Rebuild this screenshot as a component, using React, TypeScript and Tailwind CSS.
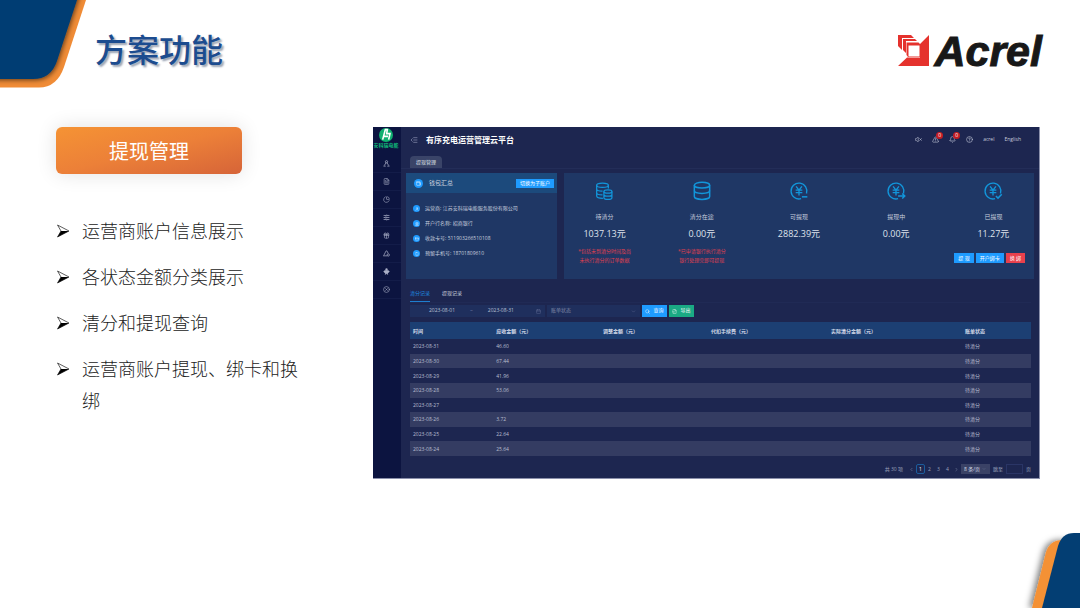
import React, { useState } from 'react';
import {
  Bell,
  Calendar,
  ChartPie,
  ChevronDown,
  ChevronLeft,
  ChevronRight,
  CircleHelp,
  CircleX,
  CreditCard,
  FileOutput,
  FileText,
  Gift,
  Landmark,
  ListIndentDecrease,
  Search,
  Smartphone,
  TriangleAlert,
  User,
  VolumeX,
  Wallet,
} from 'lucide-react';

interface BillRow {
  date: string;
  amount: string;
}

const features = [
  '运营商账户信息展示',
  '各状态金额分类展示',
  '清分和提现查询',
  '运营商账户提现、绑卡和换绑',
];

const accountInfo = [
  { icon: User, label: '运营商', value: '江苏安科瑞电能服务股份有限公司' },
  { icon: Landmark, label: '开户行名称', value: '招商银行' },
  { icon: CreditCard, label: '收款卡号', value: '511903266510108' },
  { icon: Smartphone, label: '预留手机号', value: '18701809610' },
];

const rows: BillRow[] = [
  { date: '2023-08-31', amount: '46.60' },
  { date: '2023-08-30', amount: '67.44' },
  { date: '2023-08-29', amount: '41.96' },
  { date: '2023-08-28', amount: '53.06' },
  { date: '2023-08-27', amount: '' },
  { date: '2023-08-26', amount: '3.72' },
  { date: '2023-08-25', amount: '22.64' },
  { date: '2023-08-24', amount: '25.64' },
];

const OrgIcon: React.FC<{ className?: string }> = ({ className }) => (
  <svg className={className} viewBox="0 0 24 24" fill="none" stroke="currentColor" strokeWidth="2.5">
    <circle cx="12" cy="6" r="4" />
    <path d="M10 10 5 18M14 10l5 8M3 21h5M16 21h5" strokeLinecap="round" />
  </svg>
);

const SwitchIcon: React.FC<{ className?: string }> = ({ className }) => (
  <svg className={className} viewBox="0 0 24 24" fill="none" stroke="currentColor" strokeWidth="2.5">
    <path d="M2 5h9M15 5h7M2 12h5M11 12h11M2 19h9M15 19h7" />
    <circle cx="13" cy="5" r="2" />
    <circle cx="9" cy="12" r="2" />
    <circle cx="13" cy="19" r="2" />
  </svg>
);

const AlarmIcon: React.FC<{ className?: string }> = ({ className }) => (
  <svg className={className} viewBox="0 0 24 24" fill="none" stroke="currentColor" strokeWidth="2.5">
    <path d="M3 18 9 6a3 3 0 0 1 6 0l2 4M2 20h11" strokeLinecap="round" />
    <circle cx="18" cy="17" r="4" />
  </svg>
);

const RobotIcon: React.FC<{ className?: string }> = ({ className }) => (
  <svg className={className} viewBox="0 0 24 24" fill="currentColor">
    <circle cx="12" cy="5" r="4" />
    <path d="M1 12l5-4h12l5 4-5 5h-2l2 5h-4l-2-3-2 3H6l2-5H6z" />
  </svg>
);

const menu = [OrgIcon, FileText, ChartPie, SwitchIcon, Gift, AlarmIcon, RobotIcon, CircleX];

const YenIcon: React.FC<{ mark: string }> = ({ mark }) => (
  <svg className="size-5" viewBox="0 0 24 24" fill="none" stroke="#1296db" strokeWidth="1.6">
    <path d="M21 15A9.5 9.5 0 1 0 14.5 21.2" />
    <path d="M8.5 6.5 12 11l3.5-4.5M8 11h8M8 14h8M12 11v6.5" />
    <path d={mark} strokeWidth="1.8" />
  </svg>
);

const StackIcon = () => (
  <svg className="size-5" viewBox="0 0 24 24" fill="none" stroke="#1296db" strokeWidth="1.8">
    <ellipse cx="12" cy="5" rx="9.2" ry="3.4" />
    <path d="M2.800 5v13.500c0 2 4 3.600 9.200 3.600s9.200-1.600 9.200-3.600V5" />
    <path d="M2.800 11.500c0 2 4 3.400 9.200 3.400s9.200-1.400 9.200-3.400" />
  </svg>
);

const DoubleStackIcon = () => (
  <svg className="size-5" viewBox="0 0 24 24" fill="none" stroke="#1296db" strokeWidth="1.5">
    <ellipse cx="9" cy="5" rx="7" ry="2.600" />
    <path d="M2 5v13c0 1.600 3 2.800 7.500 2.800M16 5v4M2 9.500c0 1.500 3 2.600 7 2.600M2 14c0 1.500 3 2.600 7 2.600" />
    <ellipse cx="15.500" cy="12.500" rx="4.800" ry="2" />
    <path d="M10.700 12.500v7.500c0 1.200 2 2 4.800 2s4.800-.8 4.800-2v-7.500M10.700 16.200c0 1.200 2 2 4.800 2s4.800-.8 4.800-2" />
  </svg>
);

const stats = [
  { icon: <DoubleStackIcon />, label: '待清分', value: '1037.13元', note: ['*包括未到清分时间及尚', '未执行清分的订单数据'] },
  { icon: <StackIcon />, label: '清分在途', value: '0.00元', note: ['*已申请银行执行清分', '银行处理完即可提现'] },
  { icon: <YenIcon mark="M15.500 19h6.500" />, label: '可提现', value: '2882.39元' },
  { icon: <YenIcon mark="M14.500 18h8M19.500 15l3 3-3 3" />, label: '提现中', value: '0.00元' },
  { icon: <YenIcon mark="M15.500 18l2.500 2.500 4.500-4.500" />, label: '已提现', value: '11.27元' },
];

const AcrelLogo = () => (
  <div className="flex items-center gap-1">
    <svg className="size-8" viewBox="0 0 32 32" fill="#e5322d">
      <path d="M0 0h13l3 3H4v12l-4-4z" />
      <path d="M5 4h12l2 2H8v12l-3-3z" />
      <path d="M31 0v31H0l9-8.500h13V9z" />
      <path d="M8.500 7.500h12l2.500 2.500v12H10l-1.500-2z" />
      <path d="M10.500 10.500h11v11h-11z" fill="#fff" />
    </svg>
    <span className="text-[43px] leading-8 font-bold italic text-[#181818] [-webkit-text-stroke:1px_#181818] font-['Liberation_Sans',sans-serif]">
      Acrel
    </span>
  </div>
);

const Corners = () => (
  <>
    <svg className="absolute top-0 left-0 w-24 h-24" viewBox="0 0 96 96">
      <defs>
        <filter id="soft" x="-20%" y="-20%" width="150%" height="150%">
          <feDropShadow dx="1" dy="1" stdDeviation="2.500" floodOpacity="0.6" />
        </filter>
        <filter id="softLeft" x="-40%" y="-20%" width="180%" height="150%">
          <feDropShadow dx="-3" dy="0" stdDeviation="3" floodOpacity="0.5" />
        </filter>
        <clipPath id="orangeTop">
          <path d="M0 0H86L64 67Q57 87.500 39 87.500H0z" />
        </clipPath>
      </defs>
      <path d="M0 0H86L64 67Q57 87.500 39 87.500H0z" fill="#f08c36" />
      <g clipPath="url(#orangeTop)">
        <path d="M-9 -9H80L57 61Q51 79 33 79H-9z" fill="#033e73" filter="url(#soft)" />
      </g>
    </svg>
    <svg className="absolute right-0 bottom-0 w-20 h-24" viewBox="0 0 80 96">
      <path d="M32 96 46 40Q50 28 62 28H80V96z" fill="#f49136" filter="url(#softLeft)" />
      <path d="M42 96 58 34Q62 21 74 21H80V96z" fill="#033e73" />
    </svg>
  </>
);

const Sidebar = () => (
  <nav className="w-7 shrink-0 bg-[#0c1440]">
    <div className="h-7 pr-0.5 flex flex-col items-center text-[5px] leading-[4px] text-[#10b878] font-bold whitespace-nowrap">
      <svg className="size-4" viewBox="0 0 24 24">
        <circle cx="12" cy="12" r="10.500" fill="#10b070" />
        <path d="M7 19 11 4h3l-1 6h5l-2 9M9 14h6" fill="none" stroke="#fff" strokeWidth="2.400" />
      </svg>
      安科瑞电能
    </div>
    {menu.map((Icon, i) => (
      <a key={i} href="#menu" className="h-[18px] pr-0.5 flex items-center justify-center border-b border-[#131c49] text-[#a9aec6]">
        <Icon className="size-[7px]" />
      </a>
    ))}
  </nav>
);

const Header = () => (
  <header className="h-[25px] flex items-center pl-[9px] pr-[18px] text-[#c5c9da]">
    <ListIndentDecrease className="size-2 text-[#8f96b5]" />
    <h2 className="ml-2 text-[8px] font-bold text-white">有序充电运营管理云平台</h2>
    <div className="ml-auto flex items-center gap-[10px] text-[5px]">
      <VolumeX className="size-[7px]" />
      {[TriangleAlert, Bell].map((Icon, i) => (
        <span key={i} className="relative">
          <Icon className="size-[7px]" />
          <span className="absolute -top-1 left-1 size-[7px] rounded-full bg-[#c41d24] text-white text-center leading-[7px]">0</span>
        </span>
      ))}
      <CircleHelp className="size-[7px]" />
      <a href="#user">acrel</a>
      <a href="#lang">English</a>
    </div>
  </header>
);

const WalletCard = () => (
  <section className="w-[151px] shrink-0 bg-[#1f3765] text-[#c8cfdf]">
    <div className="h-5 flex items-center px-[3px] bg-[#1c4a7c]">
      <span className="ml-[5px] size-[9px] rounded-full bg-[#1e9bff] flex items-center justify-center">
        <Wallet className="size-[5px] text-white" />
      </span>
      <h3 className="ml-1.5 text-[6px]">钱包汇总</h3>
      <button className="ml-auto h-[9px] px-1 bg-[#1e9bff] text-white text-[5px] leading-[9px]">切换为子账户</button>
    </div>
    <ul className="pt-2 pl-[7px] text-[5px]">
      {accountInfo.map(({ icon: Icon, label, value }) => (
        <li key={label} className="h-[15px] flex items-center gap-[5px] whitespace-nowrap">
          <span className="size-[7px] rounded-full bg-[#1e9bff] flex items-center justify-center">
            <Icon className="size-1 text-white" />
          </span>
          {label}: {value}
        </li>
      ))}
    </ul>
  </section>
);

const StatsCard = () => (
  <section className="flex-1 bg-[#1f3765] px-2 flex flex-col text-[#c8cfdf]">
    <div className="grid grid-cols-5 -mx-4 pt-2 text-center">
      {stats.map((s) => (
        <div key={s.label} className="flex flex-col items-center">
          {s.icon}
          <p className="mt-[11px] text-[6px] leading-[10px]">{s.label}</p>
          <p className="mt-1 text-[9px] leading-4 text-[#dfe3ec]">{s.value}</p>
          {s.note && (
            <p className="mt-[5px] text-[5px] leading-[9px] text-[#e0404f]">
              {s.note[0]}
              <br />
              {s.note[1]}
            </p>
          )}
        </div>
      ))}
    </div>
    <div className="-mt-3 pr-px flex justify-end gap-0.5 text-[5px] leading-[10px] text-white">
      <button className="px-1 bg-[#1e9bff]">提 现</button>
      <button className="px-1 bg-[#1e9bff]">开户绑卡</button>
      <button className="px-1 bg-[#e8404c]">换 绑</button>
    </div>
  </section>
);

const Filters = () => (
  <form className="mt-0.5 flex gap-0.5 h-3 text-[5px] text-[#b9c0d4]" onSubmit={(e) => e.preventDefault()}>
    <div className="w-[135px] flex items-center bg-[#1f2f5d] pr-1">
      <input aria-label="开始日期" defaultValue="2023-08-01" className="w-[60px] pl-1 text-center bg-transparent" />
      <span className="text-[#66709a]">~</span>
      <input aria-label="结束日期" defaultValue="2023-08-31" className="w-[56px] text-center bg-transparent" />
      <Calendar className="ml-auto size-[5px] text-[#66709a]" />
    </div>
    <div className="w-[93px] flex items-center bg-[#1f2f5d] px-1">
      <select aria-label="账单状态" className="flex-1 appearance-none bg-transparent text-[#8088a8]">
        <option>账单状态</option>
      </select>
      <ChevronDown className="size-[5px] text-[#66709a]" />
    </div>
    <button className="w-[25px] flex items-center justify-center gap-[3px] bg-[#1e9bff] text-white">
      <Search className="size-[5px]" />
      查询
    </button>
    <button type="button" className="w-[25px] flex items-center justify-center gap-[3px] bg-[#1aaa84] text-white">
      <FileOutput className="size-[5px]" />
      导出
    </button>
  </form>
);

const BillTable = () => (
  <table className="mt-[5px] w-full h-[134px] table-fixed text-left text-[5px] leading-[10px] text-[#b9bfd0]">
    <thead>
      <tr className="h-[17px] bg-[#1c3f73] text-[#d5dcea]">
        <th className="w-[13.4%] pl-[3px]">时间</th>
        <th className="w-[17.2%] pl-[3px]">应收金额（元）</th>
        <th className="w-[17.4%] pl-[3px]">调整金额（元）</th>
        <th className="w-[19.3%] pl-[3px]">代扣手续费（元）</th>
        <th className="w-[21.6%] pl-[3px]">实际清分金额（元）</th>
        <th className="pl-[3px]">账单状态</th>
      </tr>
    </thead>
    <tbody>
      {rows.map((row) => (
        <tr key={row.date} className="even:bg-[#343c62]">
          <td className="pl-[3px]">{row.date}</td>
          <td className="pl-[3px]">{row.amount}</td>
          <td />
          <td />
          <td />
          <td className="pl-[3px]">待清分</td>
        </tr>
      ))}
    </tbody>
  </table>
);

const Pagination = () => {
  const [page, setPage] = useState(1);

  return (
    <div className="mt-2 h-[10px] flex items-center justify-end text-[5px] leading-[10px] text-[#9aa1bb]">
      <span className="mr-1">共 30 项</span>
      <button aria-label="上一页" onClick={() => setPage(Math.max(1, page - 1))}>
        <ChevronLeft className="size-[5px] mx-0.5" />
      </button>
      {[1, 2, 3, 4].map((n) => (
        <button
          key={n}
          onClick={() => setPage(n)}
          className={n === page ? 'w-[9px] h-[10px] leading-2 border border-[#1b5c9c] text-white rounded-xs' : 'w-[9px]'}
        >
          {n}
        </button>
      ))}
      <button aria-label="下一页" onClick={() => setPage(Math.min(4, page + 1))}>
        <ChevronRight className="size-[5px] mx-0.5" />
      </button>
      <span className="w-[29px] h-[10px] flex items-center pl-[3px] pr-1 bg-[#3a4266] text-[#d5dcea]">
        <select aria-label="每页条数" className="flex-1 appearance-none bg-transparent leading-[10px]">
          <option>8 条/页</option>
        </select>
        <ChevronDown className="size-1 text-[#8088a8]" />
      </span>
      <label className="ml-[3px] flex items-center gap-[3px]">
        跳至
        <input className="w-[17px] h-[10px] border border-[#2a3566]" />
        页
      </label>
    </div>
  );
};

const Dashboard = () => {
  const [tab, setTab] = useState('清分记录');

  return (
    <div className="flex-1 flex bg-[#1d2650] border-r border-b border-[#8b90ab] font-['Open_Sans','Noto_Sans_CJK_SC',sans-serif]">
      <Sidebar />
      <div className="flex-1 min-w-0">
        <Header />
        <div className="mt-1 pl-[9px] border-b border-[#232d58]">
          <button className="block w-8 h-3 rounded-t-sm bg-[#3a4468] text-[5px] leading-3 text-[#dfe3ec]">提现管理</button>
        </div>
        <div className="mt-1 flex gap-[7px] h-[106px] ml-[5px] mr-[5px]">
          <WalletCard />
          <StatsCard />
        </div>
        <div className="pl-[9px] pr-2 pb-1">
          <div className="mt-2 h-4 flex gap-3 border-b border-[#202a55] text-[5px]">
            {['清分记录', '提现记录'].map((t) => (
              <button
                key={t}
                onClick={() => setTab(t)}
                className={t === tab ? 'border-b border-[#1e7fd0] text-[#1e8be0]' : 'border-b border-transparent text-[#c8cfdf]'}
              >
                {t}
              </button>
            ))}
          </div>
          <Filters />
          <BillTable />
          <Pagination />
        </div>
      </div>
    </div>
  );
};

const App: React.FC = () => (
  <main className="relative min-h-screen bg-white font-['Noto_Sans_CJK_SC',sans-serif]">
    <Corners />
    <div className="relative">
      <div className="pt-[26px] pl-[95px] pr-[38px] h-[100px] flex items-start justify-between">
        <h1 className="text-[32px] leading-[44px] font-medium text-[#1c4c8f] [text-shadow:2px_2px_2px_#9aa3b3]">方案功能</h1>
        <div className="pt-[9px]">
          <AcrelLogo />
        </div>
      </div>
      <div className="mt-[27px] pl-14 pr-10 flex items-start">
        <div className="w-[317px] shrink-0">
          <h2 className="w-[186px] rounded-md bg-linear-to-br from-[#f59334] via-[#ec8038] to-[#d66438] text-center text-xl leading-[47px] text-white shadow-[0_0_20px_rgba(0,0,0,0.12)]">
            提现管理
          </h2>
          <ul className="mt-10 w-[244px] flex flex-col gap-3.5 text-lg leading-8 font-light text-[#222]">
            {features.map((f) => (
              <li key={f} className="flex gap-3">
                <svg className="mt-2.5 size-3.5 shrink-0" viewBox="0 0 14 14">
                  <path d="M1.500 1 13 7 1.500 13 5 7z" fill="#fff" stroke="#333" strokeWidth="0.800" />
                  <path d="M5 7h8L1.500 13z" fill="#000" />
                </svg>
                {f}
              </li>
            ))}
          </ul>
        </div>
        <Dashboard />
      </div>
    </div>
  </main>
);

export default App;
